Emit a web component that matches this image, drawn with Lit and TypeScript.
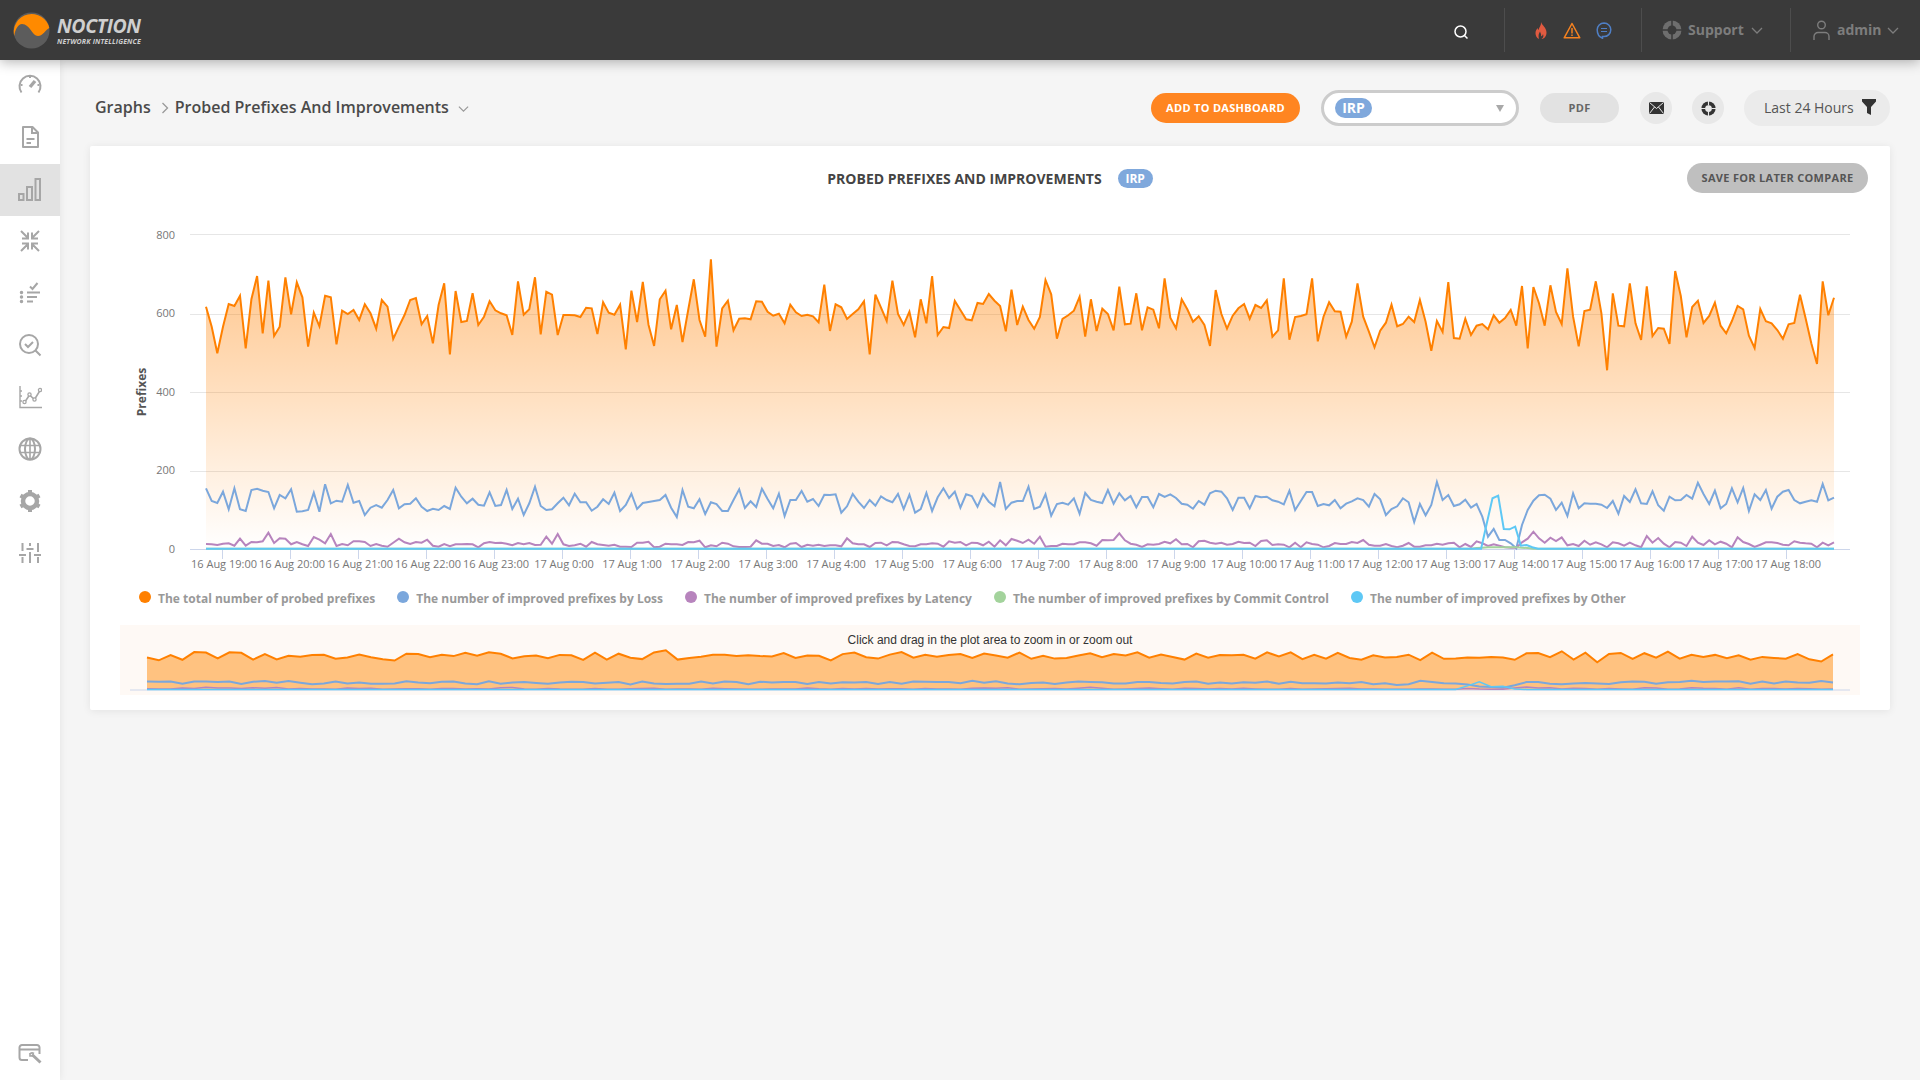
import { css, html, svg, LitElement } from 'lit';
import { customElement } from 'lit/decorators.js';

// traces read off the chart, y in 3x pixels from y=210 (baseline is 1017)
const ORANGE = [
  290,350,430,350,282,288,257,415,268,198,370,212,378,350,202,313,217,262,410,308,349,257,262,403,302,312,300,330,283,310,
  356,270,290,387,350,315,270,264,343,318,400,285,220,433,243,336,333,250,345,320,274,301,310,316,375,214,314,298,202,373,
  245,254,375,315,315,316,321,293,295,372,
  277,308,314,284,418,242,336,216,344,408,268,242,358,285,396,300,208,330,380,148,410,295,272,361,326,325,328,274,275,305,
  317,311,340,284,307,318,314,319,337,224,363,283,292,327,312,298,274,433,254,293,333,212,312,345,305,382,268,340,198,375,
  351,354,273,300,328,331,279,282,252,272,288,364,239,
  345,290,330,356,321,210,253,386,327,316,302,260,380,268,363,296,312,361,230,343,341,250,361,292,299,355,205,323,355,268,
  298,335,319,345,408,240,312,356,317,295,282,326,285,294,271,380,361,205,389,321,318,313,205,394,320,277,304,305,380,335,
  220,320,365,412,362,338,284,349,342,320,336,270,335,
  422,333,366,216,384,386,326,375,347,342,358,316,338,324,300,347,228,415,231,280,347,226,306,342,175,320,409,303,299,214,
  310,481,250,347,349,220,340,390,229,378,354,356,402,183,258,382,291,272,339,318,278,347,370,333,288,298,377,414,297,334,
  340,360,386,343,339,254,325,400,462,214,316,263,
];
const BLUE = [
  835,873,879,845,898,835,898,903,840,836,842,846,895,855,865,838,905,904,900,848,905,823,880,872,875,825,878,873,915,893,
  885,893,870,840,895,883,881,865,890,903,896,900,888,897,833,860,880,866,884,887,847,888,885,840,897,866,915,880,830,888,
  900,898,880,863,886,851,877,877,902,890,
  868,882,848,903,885,851,897,879,876,873,870,855,893,921,840,890,895,868,912,877,882,903,903,870,838,894,874,891,836,867,
  895,851,918,870,870,843,875,867,888,854,855,853,908,889,852,875,894,870,887,859,870,877,852,897,854,908,897,849,903,862,
  835,864,845,893,853,858,890,852,875,889,816,897,878,
  873,873,830,897,890,853,917,882,878,884,865,911,849,870,875,879,840,881,850,871,858,892,861,861,892,852,861,853,864,881,
  884,896,873,884,850,842,845,865,900,863,863,895,858,862,860,871,875,883,842,900,873,846,846,888,882,886,870,895,881,874,
  865,870,890,852,868,915,897,889,865,877,936,882,916,
  885,816,870,855,888,883,869,893,882,920,980,957,990,990,1000,1015,945,900,872,856,854,866,900,878,918,850,895,880,881,881,
  884,894,873,911,858,876,838,880,882,844,886,902,860,871,870,855,866,818,852,882,842,895,882,835,877,834,903,853,870,840,
  896,860,845,840,870,880,875,871,875,822,871,863,
];
const PURPLE = [
  1002,1003,1005,1001,1000,1007,986,1007,996,997,994,968,999,985,986,1003,996,1003,1008,981,989,1000,972,1008,1002,1006,994,994,996,1008,
  1002,1007,1010,998,986,997,1002,996,998,989,1007,1010,1002,1009,1003,1003,1002,1003,1012,1000,996,999,998,1001,1006,999,1003,999,1005,1004,
  980,1001,972,1003,1008,1006,1001,1010,996,1003,
  1005,1007,1004,1010,1010,1011,998,998,995,1012,1010,1001,1003,1003,1005,996,997,992,1012,1006,1009,998,1001,1009,1011,1011,1010,991,1001,1001,
  1008,1005,1012,1001,999,1011,1004,1007,1004,1008,1006,1006,1009,985,1000,1003,1003,1011,999,998,1006,996,997,1003,1008,1009,1003,1003,1000,1001,
  1010,994,998,996,1006,998,999,1006,995,1010,991,1006,987,
  992,999,989,1001,980,1010,1008,1008,1001,1003,1003,997,997,1000,1007,990,991,990,970,991,1001,1004,1011,1003,1004,1002,995,1000,988,1003,
  1002,1012,994,992,998,1001,998,1004,1002,995,999,998,1008,993,991,1005,1003,1004,1012,998,1012,997,1002,1004,1012,1008,999,1002,1002,996,
  999,990,1004,1007,1007,1002,1008,1012,1007,999,1010,1010,1006,
  1006,1001,1004,1000,998,1012,1002,1011,994,1000,1008,1003,1007,1012,1013,1013,997,986,965,985,998,983,993,982,1006,1002,1008,992,1004,997,
  1003,1012,997,1000,1007,998,1006,1012,978,998,984,1001,1012,996,998,1008,980,998,1005,991,1003,995,1001,1012,982,996,1002,1011,1004,997,
  997,999,1004,1006,994,998,1000,1001,1012,998,1006,997,
];
const flat = (n: number) => new Array(n).fill(1016);
const CYAN = [...flat(225), 940, 865, 857, 957, 958, 950, 1007, 1005, 1012, ...flat(53)];
const GREEN = [...flat(224), 1014, 1013, 1012, 1012, 1012, 1012, 1012, 1012, 1013, 1014, ...flat(54)];

const X0 = 206;
const X1 = 1834;
const xAt = (i: number, len: number) => X0 + (i * (X1 - X0)) / (len - 1);

function linePath(trace: number[]) {
  return trace.map((z, i) => `${i ? 'L' : 'M'}${xAt(i, trace.length).toFixed(1)} ${(210 + z / 3).toFixed(1)}`).join('');
}

// the navigator holds half the points, keep the sharper one of each pair
function miniPath(trace: number[], damp = 0.75) {
  const mean = trace.reduce((a, b) => a + b, 0) / trace.length;
  const pts: number[] = [];
  for (let i = 0; i < trace.length; i += 2) {
    const a = trace[i];
    const b = trace[i + 1] ?? a;
    const pick = Math.abs(a - mean) > Math.abs(b - mean) ? a : b;
    pts.push(mean + (pick - mean) * damp);
  }
  const step = (1833 - 147) / (pts.length - 1);
  return pts.map((z, i) => `${i ? 'L' : 'M'}${(147 + i * step).toFixed(1)} ${(689.5 - ((1017 - z) / 3) * 0.142).toFixed(1)}`).join('');
}

const HOURS = [
  '16 Aug 19:00', '16 Aug 20:00', '16 Aug 21:00', '16 Aug 22:00', '16 Aug 23:00',
  ...Array.from({ length: 19 }, (_, i) => `17 Aug ${i}:00`),
];

const LEGEND = [
  { color: '#ff8000', label: 'The total number of probed prefixes' },
  { color: '#7ba7dc', label: 'The number of improved prefixes by Loss' },
  { color: '#b784bd', label: 'The number of improved prefixes by Latency' },
  { color: '#a3d39c', label: 'The number of improved prefixes by Commit Control' },
  { color: '#5ec8f5', label: 'The number of improved prefixes by Other' },
];

const lifebuoy = (cut: string) => svg`
  <circle cx="10" cy="10" r="9.500" fill="currentColor" />
  <circle cx="10" cy="10" r="4.500" fill="${cut}" />
  <path d="M10 0v6M10 14v6M0 10h6M14 10h6" stroke="${cut}" stroke-width="1.500" />
`;

const NAV_ICONS = [
  svg`<path d="M3.500 19.500a10.500 10.500 0 1 1 17 0" /><path d="M12 14l5-6" stroke-width="3.400" /><path d="M12 3v2M4.500 12H2.600M21.400 12h-1.900" />`,
  svg`<path d="M5 2h9.500L20 7.500V22H5z" stroke-linejoin="round" /><path d="M14 2v6h6M8.500 14h8M8.500 18h4.500" />`,
  svg`<path d="M1 17h4.500v6H1zM9 10h5v13H9zM17.500 2h4.500v21h-4.500z" />`,
  svg`<path d="M3 2l7 7M10 3.500V9.500H4M21 2l-7 7M14 3.500V9.500h6M3 22l7-7M10 20.500V14.500H4M21 22l-7-7M14 20.500V14.500h6" />`,
  svg`<path d="M12 5.500l2.500 2.500 5-6M9 11.500h13M9 16h10M9 20.500h6" /><path d="M3.500 11.500v.1M3.500 16v.1M3.500 20.500v.1" stroke-width="3.500" stroke-linecap="round" />`,
  svg`<circle cx="11" cy="11" r="9" /><path d="M17.500 17.500l5 5M7 11l3 3 5-5" />`,
  svg`<path d="M2 1v21.500h22.500M2 6h2M2 11h2M2 16h2" stroke-width="1.400" /><path d="M7.500 16l4-6 5 4.500 5.500-9" stroke-width="1.600" /><circle cx="6.500" cy="17" r="1.600" fill="#fff" stroke-width="1.300" /><circle cx="11.500" cy="9.500" r="1.600" fill="#fff" stroke-width="1.300" /><circle cx="16.500" cy="14.500" r="1.600" fill="#fff" stroke-width="1.300" /><circle cx="22" cy="5" r="1.600" fill="#fff" stroke-width="1.300" />`,
  svg`<circle cx="12" cy="12" r="10.500" /><ellipse cx="12" cy="12" rx="5" ry="10.500" /><path d="M12 1.500v21M1.500 8.500h21M1.500 15.500h21" stroke-width="1.600" />`,
  svg`<circle cx="12" cy="12" r="7" stroke-width="4.500" /><path d="M12 1v3M12 20v3M2.500 6.500l2.600 1.500M18.900 16l2.600 1.500M2.500 17.500L5.100 16M18.900 8l2.600-1.500" stroke-width="4" />`,
  svg`<path d="M4.500 2v8M4.500 16v6M12 2v3M12 11v11M20 2v9M20 16v6M1 14h7M8.500 8h7M16 14h7" />`,
];

@customElement('app-root')
export class AppRoot extends LitElement {
  static styles = css`
    :host {
      display: block;
      width: 1920px;
      height: 1080px;
      overflow: hidden;
      background: #f5f5f5;
      font-family: "Open Sans", sans-serif;
      color: #4a4a4a;
    }
    .top {
      position: relative;
      z-index: 2;
      display: flex;
      align-items: center;
      height: 60px;
      background: #3a3a3a;
      box-shadow: 0 2px 12px rgba(0, 0, 0, 0.3);
    }
    .logo {
      display: flex;
      align-items: center;
      gap: 7px;
      margin-left: 13px;
    }
    .logo-text {
      display: flex;
      flex-direction: column;
      font-style: italic;
      font-weight: 700;
      color: #cfcfcf;
      width: 84px;
    }
    .logo-name {
      font-size: 19.500px;
      line-height: 22px;
      letter-spacing: -0.4px;
    }
    .logo-sub {
      font-size: 7px;
      line-height: 9px;
      white-space: nowrap;
      letter-spacing: 0.02em;
    }
    .top-right {
      display: flex;
      align-items: center;
      height: 44px;
      margin-left: auto;
    }
    .search {
      margin-right: 35px;
      margin-top: 4px;
      display: flex;
    }
    .top-sec {
      display: flex;
      align-items: center;
      height: 44px;
      border-left: 1px solid #4d4d4d;
      color: #7d7d7d;
      font-size: 14px;
      font-weight: 700;
    }
    .top-sec span { margin-top: -2px; }
    .alerts { width: 137px; padding-left: 29px; gap: 15px; box-sizing: border-box; }
    .support { width: 149px; padding-left: 20px; box-sizing: border-box; gap: 6px; }
    .user { width: 130px; padding-left: 22px; box-sizing: border-box; gap: 7px; }
    .support .chev { margin-left: 1px; margin-top: 0; display: flex; }
    .user .chev { margin-left: -2px; margin-top: 0; display: flex; }
    .layout {
      display: flex;
      height: 1020px;
    }
    .side {
      position: relative;
      z-index: 1;
      display: flex;
      flex-direction: column;
      width: 60px;
      flex: none;
      background: #fff;
      box-shadow: 0 0 8px rgba(0, 0, 0, 0.08);
    }
    .nav {
      display: flex;
      align-items: center;
      justify-content: center;
      height: 52px;
      flex: none;
    }
    .nav svg {
      margin-bottom: 3px;
      fill: none;
      stroke: #a6a6a6;
      stroke-width: 2;
    }
    .nav.on { background: #e2e2e2; }
    .nav.low { margin-top: auto; }
    .nav.low svg { margin-bottom: 0; }
    .main {
      flex: 1;
      padding: 30px 30px 0;
      min-width: 0;
    }
    .bar {
      display: flex;
      align-items: center;
      height: 36px;
      gap: 20px;
    }
    .crumbs {
      display: flex;
      align-items: center;
      margin-right: auto;
      margin-top: -2px;
      padding-left: 5px;
      font-size: 16px;
      font-weight: 600;
    }
    .crumbs .sep { margin: 2px 6px 0 10px; display: flex; }
    .crumbs .more { margin: 3px 0 0 9px; display: flex; }
    .btn {
      display: flex;
      align-items: center;
      justify-content: center;
      box-sizing: border-box;
      height: 30px;
      padding-bottom: 2px;
      border-radius: 15px;
      font-size: 11px;
      font-weight: 700;
      letter-spacing: 0.3px;
      white-space: nowrap;
    }
    .add { width: 149px; background: #ff8521; color: #fff; }
    .pdf { width: 79px; background: #e2e2e2; color: #666; margin-left: 1px; }
    .pick {
      display: flex;
      align-items: center;
      justify-content: space-between;
      box-sizing: border-box;
      width: 198px;
      height: 36px;
      margin-left: 1px;
      padding: 0 12px 0 11px;
      border: 3px solid #ccc;
      border-radius: 18px;
      background: #fff;
    }
    .caret {
      width: 0;
      height: 0;
      border-left: 4px solid transparent;
      border-right: 4px solid transparent;
      border-top: 7px solid #a9a9a9;
    }
    .badge {
      display: flex;
      align-items: center;
      justify-content: center;
      background: #7fa8dc;
      color: #fff;
      font-weight: 700;
      border-radius: 10px;
    }
    .pick .badge { width: 37px; height: 20px; font-size: 14px; padding-bottom: 1px; box-sizing: border-box; }
    .round {
      display: flex;
      align-items: center;
      justify-content: center;
      width: 32px;
      height: 32px;
      border-radius: 50%;
      background: #e8e8e8;
      color: #333;
    }
    .mail { margin-left: 1px; }
    .range {
      display: flex;
      align-items: center;
      justify-content: space-between;
      box-sizing: border-box;
      width: 146px;
      height: 36px;
      padding: 0 14px 2px 20px;
      border-radius: 18px;
      background: #ebebeb;
      font-size: 14px;
      color: #555;
    }
    .card {
      margin-top: 20px;
      height: 564px;
      box-sizing: border-box;
      padding-top: 17px;
      background: #fff;
      border-radius: 2px;
      box-shadow: 0 1px 8px rgba(0, 0, 0, 0.08);
    }
    .head {
      display: grid;
      grid-template-columns: 1fr auto 1fr;
      align-items: center;
      height: 30px;
      padding: 0 22px;
    }
    .title {
      grid-column: 2;
      display: flex;
      align-items: center;
      gap: 16px;
      font-size: 14px;
      font-weight: 700;
      color: #444;
    }
    .title .badge { width: 35px; height: 19px; font-size: 12px; }
    .save {
      grid-column: 3;
      justify-self: end;
      width: 181px;
      background: #bfbfbf;
      color: #555;
    }
    .chart { display: block; }
    .legend {
      display: flex;
      align-items: center;
      gap: 22px;
      height: 36px;
      padding-left: 49px;
      font-size: 12px;
      font-weight: 700;
      color: #999;
      white-space: nowrap;
    }
    .item { display: flex; align-items: center; gap: 7px; }
    .dot { width: 12px; height: 12px; border-radius: 50%; margin-top: -3px; }
    .mini { display: block; margin: 9px 0 0 30px; background: #fef9f5; }
    .ax { font: 11px "Open Sans", sans-serif; fill: #777; }
    .ytitle { font: 700 12px "Open Sans", sans-serif; fill: #555; }
    .hint { font: 12px "Liberation Sans", Arial, sans-serif; fill: #333; }
  `;

  chart() {
    const orange = linePath(ORANGE);
    const ys = [[800, 234.5, 239], [600, 314.5, 317], [400, 392.5, 396], [200, 471.5, 474]];
    return html`
      <svg class="chart" width="1800" height="387" viewBox="90 193 1800 387">
        <defs>
          <linearGradient id="area" gradientUnits="userSpaceOnUse" x1="0" y1="234" x2="0" y2="549">
            <stop offset="0" stop-color="#ff8000" stop-opacity="0.5" />
            <stop offset="1" stop-color="#ff8000" stop-opacity="0" />
          </linearGradient>
        </defs>
        ${ys.map(([v, y, ty]) => svg`
          <line x1="190" x2="1850" y1="${y}" y2="${y}" stroke="#e6e6e6" />
          <text class="ax" x="175" y="${ty}" text-anchor="end">${v}</text>
        `)}
        <text class="ax" x="175" y="553" text-anchor="end">0</text>
        <text class="ytitle" transform="translate(146 392) rotate(-90)" text-anchor="middle">Prefixes</text>
        <path d="${orange}L${X1} 549L${X0} 549Z" fill="url(#area)" />
        <line x1="190" x2="1850" y1="549.500" y2="549.500" stroke="#ccd6eb" />
        ${HOURS.map((h, i) => svg`
          <line x1="${222.5 + i * 68}" x2="${222.5 + i * 68}" y1="549" y2="559" stroke="#ccd6eb" />
          <text class="ax" x="${224 + i * 68}" y="568" text-anchor="middle">${h}</text>
        `)}
        <path d="${orange}" fill="none" stroke="#ff8000" stroke-width="2" />
        <path d="${linePath(BLUE)}" fill="none" stroke="#7ba7dc" stroke-width="2" />
        <path d="${linePath(PURPLE)}" fill="none" stroke="#b784bd" stroke-width="2" />
        <path d="${linePath(GREEN)}" fill="none" stroke="#a3d39c" stroke-width="2" />
        <path d="${linePath(CYAN)}" fill="none" stroke="#5ec8f5" stroke-width="2" />
      </svg>
    `;
  }

  overview() {
    const orange = miniPath(ORANGE);
    return html`
      <svg class="mini" width="1740" height="70" viewBox="120 625 1740 70">
        <line x1="130" x2="1850" y1="690" y2="690" stroke="#ccd6eb" />
        <path d="${orange}L1833 689.500L147 689.500Z" fill="#ffc280" />
        <path d="${orange}" fill="none" stroke="#ff8000" stroke-width="2" />
        <path d="${miniPath(BLUE)}" fill="none" stroke="#7ba7dc" stroke-width="2" />
        <path d="${miniPath(PURPLE, 1)}" fill="none" stroke="#b784bd" stroke-width="1.500" />
        <path d="${miniPath(CYAN, 1)}" fill="none" stroke="#5ec8f5" stroke-width="1.500" />
        <text class="hint" x="990" y="644" text-anchor="middle">Click and drag in the plot area to zoom in or zoom out</text>
      </svg>
    `;
  }

  chevron(color: string, size = 12) {
    return html`<svg width="${size}" height="${size}" viewBox="0 0 12 12" fill="none" stroke="${color}" stroke-width="1.300"><path d="M1 4l5 5 5-5" /></svg>`;
  }

  render() {
    return html`
      <div class="top">
        <div class="logo">
          <svg width="37" height="37" viewBox="0 0 37 37">
            <circle cx="18.500" cy="18.500" r="18" fill="#5c5c5c" />
            <path d="M1.200 24A18 18 0 1 1 36.300 16C33 17 30 24 25 24C19 24 17 12 9 12C5 12 2 18 1.200 24Z" fill="#ff8a00" />
          </svg>
          <div class="logo-text">
            <span class="logo-name">NOCTION</span>
            <span class="logo-sub">NETWORK INTELLIGENCE</span>
          </div>
        </div>
        <div class="top-right">
          <div class="search">
            <svg width="16" height="16" viewBox="0 0 16 16" fill="none" stroke="#fff" stroke-width="1.500"><circle cx="7.500" cy="7.500" r="5.500" /><path d="M11.500 11.500l3 3" /></svg>
          </div>
          <div class="top-sec alerts">
            <svg width="14" height="17" viewBox="0 0 14 17" fill="#e05a40"><path d="M7 0c.6 3 5.500 5.500 5.500 10.500C12.500 14.500 10 17 7.500 17c1.500-1 2.500-2.500 1.500-5-.5 1.500-1 2-2 2.500.5-2-.5-3.500-1-5-1 2-2 3.500-1 7.500C2.500 16 1.500 13.500 1.500 11c0-2 1-3.500 2-5 .2 1 .5 1.500 1 2C5 5.500 7.500 3 7 0z" /></svg>
            <svg width="18" height="17" viewBox="0 0 18 17" fill="none" stroke="#f58220" stroke-width="1.500"><path d="M9 1.500L1.200 15.800h15.600z" stroke-linejoin="round" /><path d="M9 6v5.500M9 12.500v1.500" /></svg>
            <svg width="16" height="17" viewBox="0 0 16 17" fill="none" stroke="#4f7fc5" stroke-width="1.500"><path d="M8 1a6.800 6.800 0 0 1 0 13.600H6.500v1.600C3 15 1.200 11.500 1.200 7.800A6.800 6.800 0 0 1 8 1z" /><path d="M5 6.500h6M5 9.500h6" stroke-width="1.100" /></svg>
          </div>
          <div class="top-sec support">
            <svg width="20" height="20" viewBox="0 0 20 20" color="#6e6e6e">${lifebuoy('#3a3a3a')}</svg>
            <span>Support</span>
            <span class="chev">${this.chevron('#7d7d7d')}</span>
          </div>
          <div class="top-sec user">
            <svg width="17" height="20" viewBox="0 0 17 20" fill="none" stroke="#7d7d7d" stroke-width="1.400"><circle cx="8.500" cy="5" r="3.800" /><path d="M1 20v-3.500a4 4 0 0 1 4-4h7a4 4 0 0 1 4 4V20" /></svg>
            <span>admin</span>
            <span class="chev">${this.chevron('#7d7d7d')}</span>
          </div>
        </div>
      </div>
      <div class="layout">
        <div class="side">
          ${NAV_ICONS.map((icon, i) => html`
            <div class="nav ${i === 2 ? 'on' : ''}">
              <svg width="24" height="24" viewBox="0 0 24 24">${icon}</svg>
            </div>
          `)}
          <div class="nav low">
            <svg width="24" height="24" viewBox="0 0 24 24">
              <path d="M10 18H4a2.500 2.500 0 0 1-2.500-2.500v-10A2.500 2.500 0 0 1 4 3h15a2.500 2.500 0 0 1 2.500 2.500V12M1.500 7.500h20" />
              <path d="M14 12.500l8.500 8" stroke-width="3" />
              <path d="M11.500 12.500c1-1.500 3-2 4.500-1M12 11v3h3" stroke-width="1.600" />
            </svg>
          </div>
        </div>
        <div class="main">
          <div class="bar">
            <div class="crumbs">
              <span>Graphs</span>
              <span class="sep"><svg width="8" height="12" viewBox="0 0 8 12" fill="none" stroke="#999" stroke-width="1.300"><path d="M1.500 1l5 5-5 5" /></svg></span>
              <span>Probed Prefixes And Improvements</span>
              <span class="more">${this.chevron('#999', 11)}</span>
            </div>
            <div class="btn add">ADD TO DASHBOARD</div>
            <div class="pick"><span class="badge">IRP</span><span class="caret"></span></div>
            <div class="btn pdf">PDF</div>
            <div class="round mail">
              <svg width="15" height="12" viewBox="0 0 15 12" fill="#333"><path d="M0 0h15v12H0z" /><path d="M.5.5l7 6 7-6M.5 11.500l5-6.500M14.500 11.500l-5-6.500" fill="none" stroke="#e8e8e8" stroke-width="1" /></svg>
            </div>
            <div class="round">
              <svg width="15" height="15" viewBox="0 0 20 20">${lifebuoy('#e8e8e8')}</svg>
            </div>
            <div class="range">
              <span>Last 24 Hours</span>
              <svg width="14" height="16" viewBox="0 0 14 16" fill="#333"><path d="M0 0h14v2.500L9 8v8l-4-2V8L0 2.500z" /></svg>
            </div>
          </div>
          <div class="card">
            <div class="head">
              <div class="title"><span>PROBED PREFIXES AND IMPROVEMENTS</span><span class="badge">IRP</span></div>
              <div class="btn save">SAVE FOR LATER COMPARE</div>
            </div>
            ${this.chart()}
            <div class="legend">
              ${LEGEND.map((l) => html`
                <div class="item"><span class="dot" style="background:${l.color}"></span><span>${l.label}</span></div>
              `)}
            </div>
            ${this.overview()}
          </div>
        </div>
      </div>
    `;
  }
}
